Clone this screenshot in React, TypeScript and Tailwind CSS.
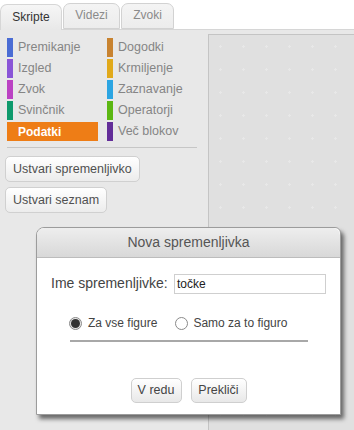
import React from 'react';

const leftCats = [
  { name: 'Premikanje', color: 'bg-[#4a6cd4]' },
  { name: 'Izgled', color: 'bg-[#8a55d7]' },
  { name: 'Zvok', color: 'bg-[#bb42c3]' },
  { name: 'Svinčnik', color: 'bg-[#0e9a6c]' },
];

const rightCats = [
  { name: 'Dogodki', color: 'bg-[#c88330]' },
  { name: 'Krmiljenje', color: 'bg-[#e1a91a]' },
  { name: 'Zaznavanje', color: 'bg-[#2ca5e2]' },
  { name: 'Operatorji', color: 'bg-[#5cb712]' },
  { name: 'Več blokov', color: 'bg-[#632d99]' },
];

const CatRow: React.FC<{ name: string; color: string }> = ({ name, color }) => (
  <div className="flex items-center h-[19px]">
    <span className={`w-[6px] h-[19px] ${color}`} />
    <span className="ml-[5px] text-[12.5px] text-[#858585] leading-none">{name}</span>
  </div>
);

const App: React.FC = () => {
  return (
    <div className="relative w-[354px] h-[430px] overflow-hidden bg-white font-['Liberation_Sans',Arial,sans-serif]">
      {/* Tabs */}
      <div className="flex items-end h-[29px] pt-[3px]">
        <div className="w-[62px] h-[26px] rounded-t-[7px] border border-b-0 border-[#d6d6d6] bg-gradient-to-b from-[#f6f6f6] to-[#e8e8e8] flex items-center justify-center text-[12px] text-[#333] relative z-10 -mb-px pb-[2px]">
          Skripte
        </div>
        <div className="w-[57px] h-[26px] ml-px rounded-t-[7px] border border-[#d2d2d2] bg-gradient-to-b from-[#f4f4f4] to-[#ececec] flex items-center justify-center text-[12px] text-[#8a8a8a] pb-[2px]">
          Videzi
        </div>
        <div className="w-[53px] h-[26px] ml-px rounded-t-[7px] border border-[#d2d2d2] bg-gradient-to-b from-[#f4f4f4] to-[#ececec] flex items-center justify-center text-[12px] text-[#8a8a8a] pb-[2px]">
          Zvoki
        </div>
      </div>

      {/* Main */}
      <div className="flex h-[401px] bg-[#e8e8e8] border-t border-[#d6d6d6]">
        <div className="w-[208px] shrink-0 pt-[8px]">
          <div className="flex pl-[7px]">
            <div className="w-[100px] flex flex-col gap-[2px]">
              {leftCats.map(c => <CatRow key={c.name} {...c} />)}
              <div className="w-[91px] h-[19px] bg-[#ee7d16] flex items-center pl-[11px] text-[12px] font-bold text-white leading-none">
                Podatki
              </div>
            </div>
            <div className="flex flex-col gap-[2px]">
              {rightCats.map(c => <CatRow key={c.name} {...c} />)}
            </div>
          </div>
          <div className="ml-[7px] mt-[6px] w-[190px] h-px bg-[#c6c6c6]" />
          <div className="flex flex-col items-start gap-[5px] pl-[5px] mt-[8px]">
            <button className="h-[26px] px-[7px] rounded-[5px] border border-[#d0d0d0] bg-gradient-to-b from-white to-[#ececec] text-[12.5px] text-[#505050]">
              Ustvari spremenljivko
            </button>
            <button className="h-[26px] px-[7px] rounded-[5px] border border-[#d0d0d0] bg-gradient-to-b from-white to-[#ececec] text-[12.5px] text-[#505050]">
              Ustvari seznam
            </button>
          </div>
        </div>
        <div className="flex-1 mt-[4px] border-l border-t border-[#c4c4c4] bg-[#e0e0e0] bg-[radial-gradient(circle,#e8e8e8_1px,transparent_1.5px)] bg-[length:23px_23px]" />
      </div>

      {/* Dialog */}
      <div className="absolute left-[36px] top-[227px] w-[305px] h-[188px] flex flex-col border border-[#9c9c9c] rounded-tl-[8px] rounded-tr-[6px] bg-white shadow-[3px_4px_4px_rgba(0,0,0,0.55)]">
        <div className="h-[30px] shrink-0 rounded-t-[7px] border-b border-[#bcbcbc] bg-gradient-to-b from-[#eeeeee] to-[#d8d8d8] flex items-center justify-center text-[14px] text-[#555]">
          Nova spremenljivka
        </div>
        <div className="flex items-center mt-[15px] pl-[14px]">
          <span className="text-[14px] text-[#444] w-[123px]">Ime spremenljivke:</span>
          <div className="w-[152px] h-[20px] border border-[#cfcfcf] flex items-center pl-[2px] text-[12px] text-[#222]">
            točke
          </div>
        </div>
        <div className="flex items-center mt-[22px] pl-[32px] h-[14px] text-[12px] text-[#444]">
          <span className="w-[13px] h-[13px] rounded-full border border-[#8a8a8a] bg-[#e6e6e6] flex items-center justify-center">
            <span className="w-[9px] h-[9px] rounded-full bg-[#333]" />
          </span>
          <span className="ml-[6px]">Za vse figure</span>
          <span className="ml-[18px] w-[13px] h-[13px] rounded-full border border-[#8a8a8a] bg-white" />
          <span className="ml-[5px]">Samo za to figuro</span>
        </div>
        <div className="mt-[10px] mx-auto w-[238px] h-[2px] bg-[#a8a8a8]" />
        <div className="flex justify-center gap-[9px] mt-[36px]">
          <button className="w-[51px] h-[25px] rounded-[5px] border border-[#cfcfcf] bg-gradient-to-b from-white to-[#e8e8e8] text-[12.5px] text-[#444]">
            V redu
          </button>
          <button className="w-[56px] h-[25px] rounded-[5px] border border-[#cfcfcf] bg-gradient-to-b from-white to-[#e8e8e8] text-[12.5px] text-[#444]">
            Prekliči
          </button>
        </div>
      </div>
    </div>
  );
};

export default App;
